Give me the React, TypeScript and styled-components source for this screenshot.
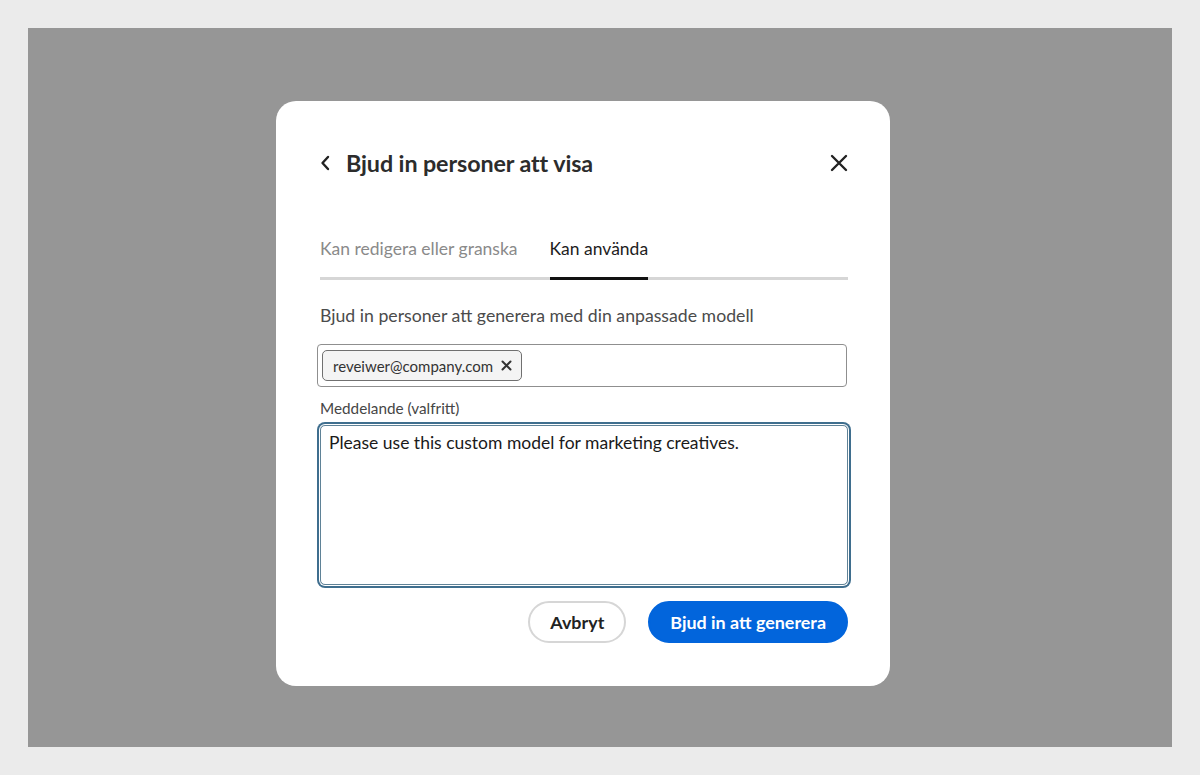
import React from "react";
import styled, { createGlobalStyle } from "styled-components";

const Global = createGlobalStyle`
  html, body { margin: 0; padding: 0; }
  body {
    background: #ebebeb;
    font-family: Lato, "Noto Sans", "Liberation Sans", sans-serif;
    -webkit-font-smoothing: antialiased;
  }
  * { box-sizing: border-box; }
`;

const Page = styled.div`
  width: 1200px;
  height: 775px;
  padding: 28px;
`;

const Overlay = styled.div`
  width: 1144px;
  height: 719px;
  background: #969696;
  padding: 73px 0 0 248px;
`;

const Dialog = styled.div`
  width: 614px;
  height: 585px;
  background: #ffffff;
  border-radius: 20px;
  padding: 42px 42px 43px 44px;
  display: flex;
  flex-direction: column;
`;

const Header = styled.div`
  height: 40px;
  display: flex;
  align-items: center;
  justify-content: space-between;
`;

const TitleGroup = styled.div`
  display: flex;
  align-items: center;
  gap: 16px;
`;

const IconButton = styled.button`
  border: 0;
  background: transparent;
  padding: 0;
  display: flex;
  align-items: center;
  justify-content: center;
  color: #222;
  cursor: pointer;
`;

const Title = styled.h1`
  margin: 0;
  font-size: 23.3px;
  font-weight: 700;
  color: #2c2c2c;
  letter-spacing: -0.1px;
`;

const Tabs = styled.div`
  margin-top: 54px;
  display: flex;
  gap: 32px;
  border-bottom: 3px solid #d6d6d6;
`;

const Tab = styled.div<{ $active?: boolean }>`
  font-size: 17.5px;
  line-height: 24px;
  padding-bottom: 16px;
  margin-bottom: -3px;
  color: ${(p) => (p.$active ? "#1d1d1d" : "#8a8a8a")};
  border-bottom: 3px solid ${(p) => (p.$active ? "#111" : "transparent")};
`;

const Description = styled.p`
  margin: 24px 0 0;
  font-size: 17.7px;
  line-height: 24px;
  color: #4b4b4b;
`;

const TagField = styled.div`
  margin: 16px 0 0 -3px;
  width: 530px;
  height: 43px;
  border: 1px solid #8f8f8f;
  border-radius: 4px;
  display: flex;
  align-items: center;
  padding: 0 4px;
`;

const Chip = styled.div`
  height: 31px;
  display: flex;
  align-items: center;
  gap: 8px;
  padding: 0 9px 0 10px;
  background: #f4f4f4;
  border: 1px solid #707070;
  border-radius: 5px;
  font-size: 15px;
  color: #333;
`;

const ChipX = styled.span`
  display: flex;
  align-items: center;
`;

const Label = styled.label`
  margin-top: 11px;
  font-size: 15.3px;
  line-height: 20px;
  color: #464646;
`;

const MessageBox = styled.div`
  margin-top: 7px;
  height: 160px;
  border: 1px solid #5f8297;
  border-radius: 5px;
  box-shadow: 0 0 0 1px #ffffff, 0 0 0 3px #3f6e8e;
  padding: 4px 8px;
  font-size: 17.5px;
  line-height: 26px;
  color: #1a1a1a;
`;

const Actions = styled.div`
  margin-top: 16px;
  display: flex;
  justify-content: flex-end;
  gap: 22px;
`;

const Button = styled.button<{ $primary?: boolean }>`
  height: 42px;
  border-radius: 21px;
  font-family: inherit;
  font-size: 17.9px;
  font-weight: 700;
  cursor: pointer;
  padding: 0 20px;
  border: 2px solid ${(p) => (p.$primary ? "#0265dc" : "#d6d6d6")};
  background: ${(p) => (p.$primary ? "#0265dc" : "#ffffff")};
  color: ${(p) => (p.$primary ? "#ffffff" : "#222")};
`;

export default function App() {
  return (
    <>
      <Global />
      <Page>
        <Overlay>
          <Dialog>
            <Header>
              <TitleGroup>
                <IconButton aria-label="Tillbaka">
                  <svg width="10" height="16" viewBox="0 0 10 16">
                    <path d="M8 2 L2.5 8 L8 14" fill="none" stroke="#222" strokeWidth="2.4" strokeLinecap="round" strokeLinejoin="round" />
                  </svg>
                </IconButton>
                <Title>Bjud in personer att visa</Title>
              </TitleGroup>
              <IconButton aria-label="Stäng">
                <svg width="18" height="18" viewBox="0 0 18 18">
                  <path d="M2 2 L16 16 M16 2 L2 16" fill="none" stroke="#222" strokeWidth="2.4" strokeLinecap="round" />
                </svg>
              </IconButton>
            </Header>
            <Tabs>
              <Tab>Kan redigera eller granska</Tab>
              <Tab $active>Kan använda</Tab>
            </Tabs>
            <Description>Bjud in personer att generera med din anpassade modell</Description>
            <TagField>
              <Chip>
                reveiwer@company.com
                <ChipX>
                  <svg width="11" height="11" viewBox="0 0 11 11">
                    <path d="M1.5 1.5 L9.5 9.5 M9.5 1.5 L1.5 9.5" fill="none" stroke="#333" strokeWidth="2" strokeLinecap="round" />
                  </svg>
                </ChipX>
              </Chip>
            </TagField>
            <Label>Meddelande (valfritt)</Label>
            <MessageBox>Please use this custom model for marketing creatives.</MessageBox>
            <Actions>
              <Button>Avbryt</Button>
              <Button $primary>Bjud in att generera</Button>
            </Actions>
          </Dialog>
        </Overlay>
      </Page>
    </>
  );
}
